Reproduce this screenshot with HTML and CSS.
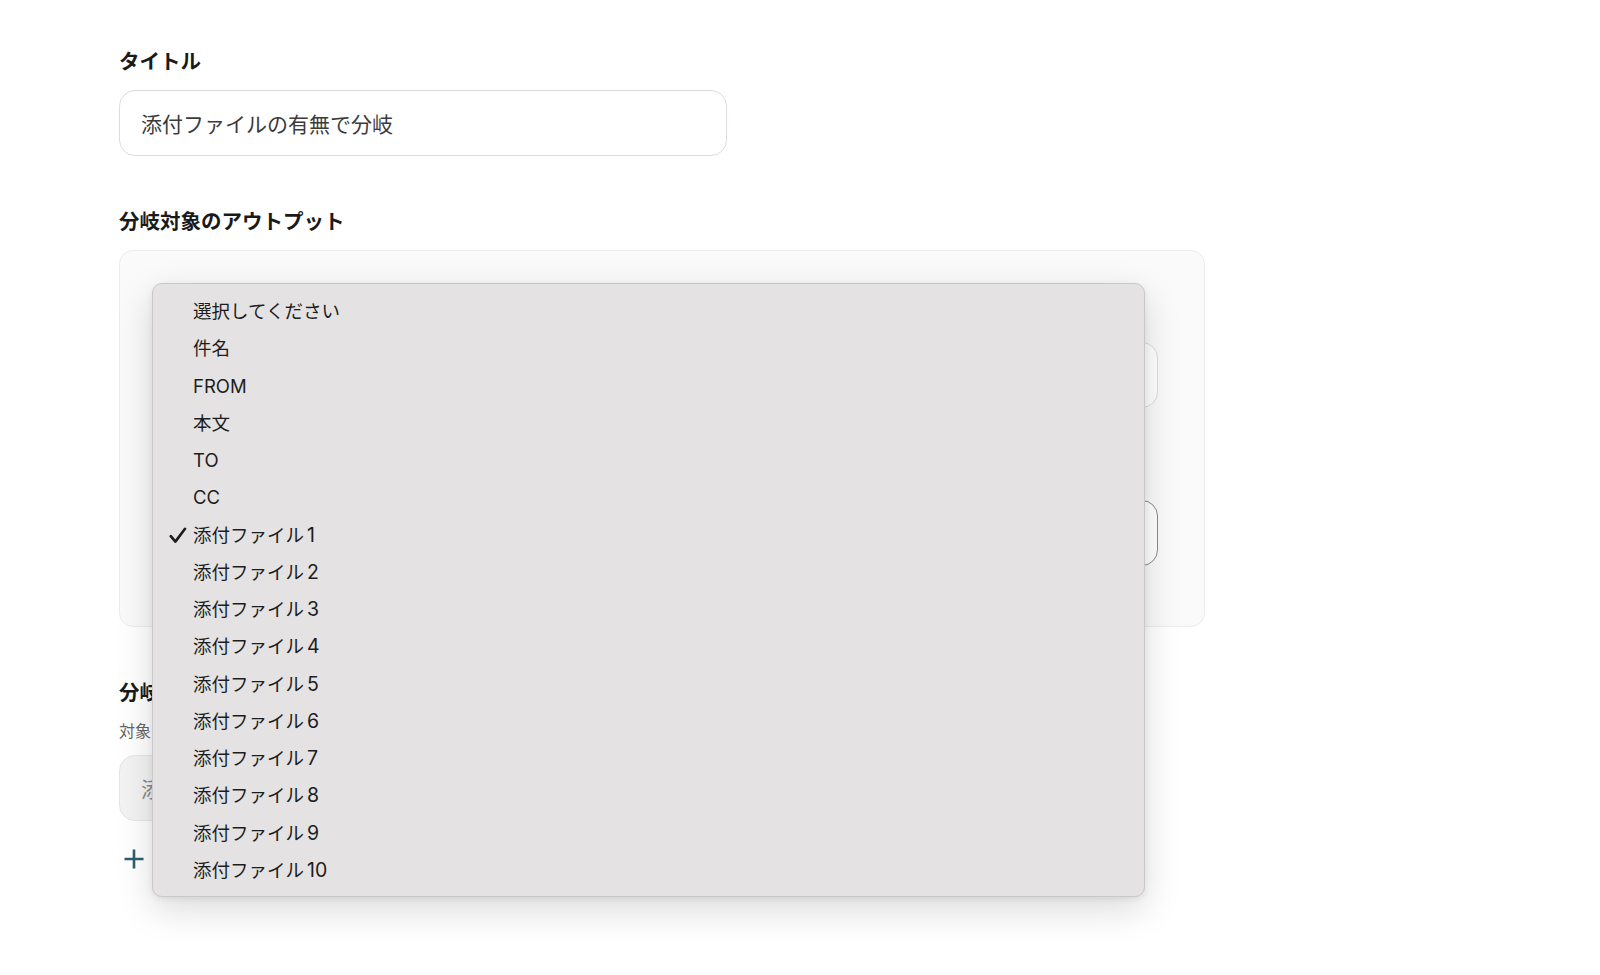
FILE: index.html
```html
<!DOCTYPE html>
<html lang="ja">
<head>
<meta charset="utf-8">
<title>分岐設定</title>
<link rel="stylesheet" href="styles.css">
</head>
<body>
<main class="page">
  <section class="field">
    <h2 class="label">タイトル</h2>
    <div class="input">添付ファイルの有無で分岐</div>
  </section>

  <section class="field field-gap">
    <h2 class="label">分岐対象のアウトプット</h2>
    <div class="card">
      <div class="card-block">
        <div class="sub-label"></div>
        <div class="card-input"></div>
      </div>
      <div class="card-block">
        <div class="sub-label"></div>
        <div class="card-input card-input-focus"></div>
      </div>
    </div>
  </section>

  <section class="field field-gap">
    <h2 class="label">分岐条件</h2>
    <p class="hint">対象</p>
    <div class="input input-muted">添</div>
    <div class="add-row">
      <svg class="plus" width="22" height="22" viewBox="0 0 22 22" aria-hidden="true">
        <path d="M11 1.5V20.5M1.5 11H20.5" stroke="#2c5f70" stroke-width="2.6" stroke-linecap="butt" fill="none"/>
      </svg>
    </div>
  </section>

  <ul class="menu">
    <li class="menu-item">選択してください</li>
    <li class="menu-item">件名</li>
    <li class="menu-item">FROM</li>
    <li class="menu-item">本文</li>
    <li class="menu-item">TO</li>
    <li class="menu-item">CC</li>
    <li class="menu-item checked">
      <svg class="check" width="18" height="17" viewBox="0 0 18 17" aria-hidden="true">
        <path d="M1.8 9.2L6.4 14.6L16 1.8" stroke="#1d1d1d" stroke-width="2.6" fill="none" stroke-linecap="round" stroke-linejoin="round"/>
      </svg>添付ファイル<span class="num">1</span></li>
    <li class="menu-item">添付ファイル<span class="num">2</span></li>
    <li class="menu-item">添付ファイル<span class="num">3</span></li>
    <li class="menu-item">添付ファイル<span class="num">4</span></li>
    <li class="menu-item">添付ファイル<span class="num">5</span></li>
    <li class="menu-item">添付ファイル<span class="num">6</span></li>
    <li class="menu-item">添付ファイル<span class="num">7</span></li>
    <li class="menu-item">添付ファイル<span class="num">8</span></li>
    <li class="menu-item">添付ファイル<span class="num">9</span></li>
    <li class="menu-item">添付ファイル<span class="num">10</span></li>
  </ul>
</main>
</body>
</html>
```

FILE: styles.css
```css
* { box-sizing: border-box; }

html, body {
  margin: 0;
  padding: 0;
  background: #ffffff;
}

body {
  font-family: "Noto Sans CJK JP", "Noto Sans", sans-serif;
  color: #1a1a1a;
}

.page {
  position: relative;
  width: 1600px;
  height: 975px;
  padding: 45px 0 0 119px;
}

.field {
  display: flex;
  flex-direction: column;
}

.field-gap {
  margin-top: 49px;
}

.label {
  margin: 0 0 14px;
  font-size: 20.5px;
  line-height: 31px;
  font-weight: 700;
  color: #1a1a1a;
  white-space: nowrap;
}

.input {
  width: 608px;
  height: 66px;
  border: 1px solid #dcdde3;
  border-radius: 16px;
  background: #ffffff;
  padding: 0 21px;
  display: flex;
  align-items: center;
  font-size: 21px;
  color: #3b3b3b;
}

.input-muted {
  background: #f3f3f3;
  border-color: #e6e6e6;
  color: #8a8a8a;
}

.card {
  width: 1086px;
  height: 377px;
  background: #fafafa;
  border: 1px solid #ececec;
  border-radius: 14px;
  padding: 45px 46px 62px;
  display: flex;
  flex-direction: column;
  gap: 46px;
}

.card-block {
  display: flex;
  flex-direction: column;
  gap: 15px;
}

.sub-label {
  height: 31px;
}

.card-input {
  height: 66px;
  border: 1px solid #dedede;
  border-radius: 16px;
  background: #ffffff;
}

.card-input-focus {
  border-color: #8a8a8a;
}

.hint {
  margin: -3px 0 13px;
  font-size: 16px;
  line-height: 24px;
  color: #666;
}

.add-row {
  display: flex;
  align-items: center;
  margin-top: 27px;
  padding-left: 4px;
  height: 22px;
}

.menu {
  position: absolute;
  left: 152px;
  top: 283px;
  width: 993px;
  height: 614px;
  margin: 0;
  padding: 9px 0;
  list-style: none;
  background: #e4e2e3;
  border: 1px solid #c9c7c8;
  border-radius: 10px;
  box-shadow: 0 12px 36px rgba(0, 0, 0, 0.15), 0 2px 6px rgba(0, 0, 0, 0.07);
  font-family: "Inter", "Noto Sans CJK JP", sans-serif;
}

.menu-item {
  position: relative;
  height: 37.25px;
  line-height: 37.25px;
  padding-left: 40px;
  font-size: 18.5px;
  color: #1d1d1d;
  white-space: nowrap;
}

.num {
  margin-left: 3px;
  font-size: 19.5px;
}

.check {
  position: absolute;
  left: 16px;
  top: 10px;
}
```
